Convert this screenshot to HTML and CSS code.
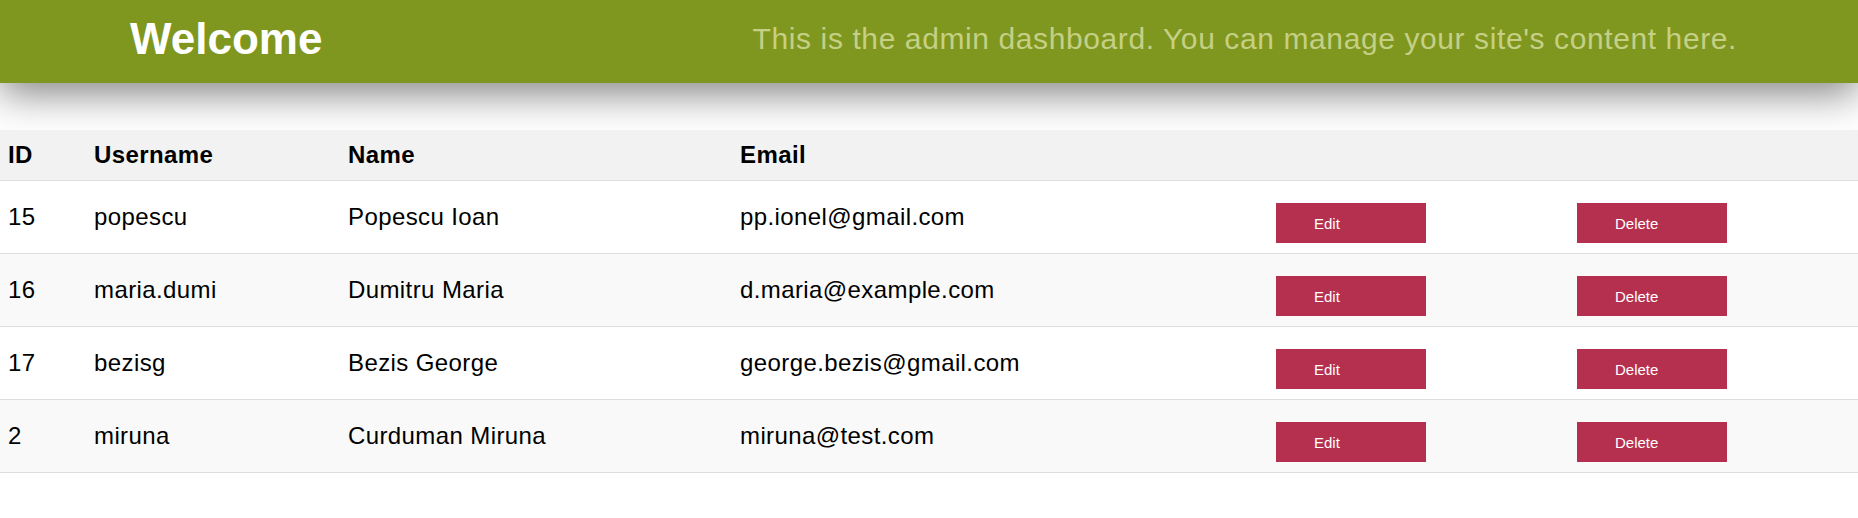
FILE: index.html
```html
<!DOCTYPE html>
<html lang="en">
<head>
<meta charset="utf-8">
<title>Admin Dashboard</title>
<link rel="stylesheet" href="styles.css">
</head>
<body>
<header class="topbar">
  <h1 class="topbar-title">Welcome</h1>
  <p class="topbar-sub">This is the admin dashboard. You can manage your site's content here.</p>
</header>
<table class="users">
  <thead>
    <tr>
      <th class="col-id">ID</th>
      <th class="col-user">Username</th>
      <th class="col-name">Name</th>
      <th class="col-email">Email</th>
      <th class="col-edit"></th>
      <th class="col-del"></th>
    </tr>
  </thead>
  <tbody>
    <tr>
      <td>15</td><td>popescu</td><td>Popescu Ioan</td><td>pp.ionel@gmail.com</td>
      <td class="act"><button class="btn">Edit</button></td>
      <td class="act"><button class="btn">Delete</button></td>
    </tr>
    <tr>
      <td>16</td><td>maria.dumi</td><td>Dumitru Maria</td><td>d.maria@example.com</td>
      <td class="act"><button class="btn">Edit</button></td>
      <td class="act"><button class="btn">Delete</button></td>
    </tr>
    <tr>
      <td>17</td><td>bezisg</td><td>Bezis George</td><td>george.bezis@gmail.com</td>
      <td class="act"><button class="btn">Edit</button></td>
      <td class="act"><button class="btn">Delete</button></td>
    </tr>
    <tr>
      <td>2</td><td>miruna</td><td>Curduman Miruna</td><td>miruna@test.com</td>
      <td class="act"><button class="btn">Edit</button></td>
      <td class="act"><button class="btn">Delete</button></td>
    </tr>
  </tbody>
</table>
</body>
</html>
```
FILE: styles.css
```css
html, body {
  margin: 0;
  padding: 0;
  background: #ffffff;
  font-family: "Liberation Sans", Arial, sans-serif;
  color: #000;
}

.topbar {
  display: flex;
  align-items: center;
  justify-content: space-between;
  box-sizing: border-box;
  height: 83px;
  padding: 0 121px 6px 130px;
  background: #7f971e;
  box-shadow: 0 10px 40px rgba(0, 0, 0, 0.5);
  margin-bottom: 47px;
}

.topbar-title {
  margin: 0;
  font-size: 44px;
  font-weight: bold;
  color: #ffffff;
}

.topbar-sub {
  margin: 0;
  font-size: 30px;
  letter-spacing: 0.6px;
  color: #c5cf86;
}

.users {
  width: 100%;
  border-collapse: collapse;
  table-layout: fixed;
  font-size: 24px;
  letter-spacing: 0.4px;
}

.col-id { width: 70px; }
.col-user { width: 238px; }
.col-name { width: 376px; }
.col-email { width: 520px; }
.col-edit { width: 285px; }

.users th {
  background: #f2f2f2;
  text-align: left;
  font-weight: bold;
  padding: 11px 8px;
  line-height: 28px;
  border-bottom: 1px solid #dddddd;
}

.users td {
  padding: 22px 8px;
  line-height: 28px;
  border-bottom: 1px solid #dddddd;
  vertical-align: middle;
}

.users tbody tr:nth-child(even) {
  background: #f9f9f9;
}

.users td.act {
  padding: 0 8px;
}

.btn {
  display: block;
  margin-top: 12px;
  width: 150px;
  height: 40px;
  padding: 0 0 0 38px;
  border: none;
  background: #b5304f;
  color: #ffffff;
  font-family: "Liberation Sans", Arial, sans-serif;
  font-size: 15px;
  letter-spacing: 0;
  text-align: left;
  cursor: pointer;
}
```
